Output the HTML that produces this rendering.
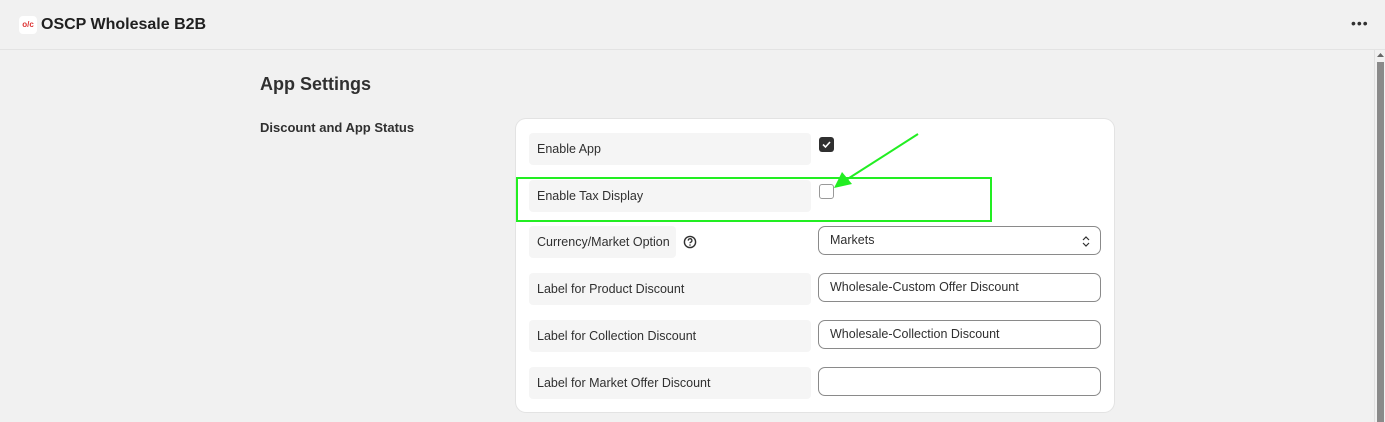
<!DOCTYPE html>
<html><head><style>
body{margin:0;width:1385px;height:422px;overflow:hidden;background:#f1f1f1;font-family:"Liberation Sans",Arial,sans-serif;color:#303030;position:relative}
.hdr{position:absolute;left:0;top:0;width:1385px;height:49px;border-bottom:1px solid #e3e3e3;background:#f1f1f1}
.logo{position:absolute;left:19px;top:16px;width:18px;height:18px;background:#fff;border-radius:4px;font-size:8px;font-weight:bold;color:#d33;line-height:18px;text-align:center}
.ttl{position:absolute;left:41px;top:16px;line-height:18px;font-size:16px;font-weight:bold;color:#202020}
.dots{position:absolute;left:1351px;top:14px;font-size:14px;letter-spacing:1px;line-height:18px}
.sb{position:absolute;left:1374px;top:50px;width:11px;height:372px;background:#f1f1f1;border-left:1px solid #e0e0e0}
.thumb{position:absolute;left:1377px;top:62px;width:7px;height:360px;background:#8a8a8a}
h1{position:absolute;left:260px;top:74px;margin:0;font-size:18px;font-weight:bold;color:#303030}
.sec{position:absolute;left:260px;top:120px;font-size:13px;font-weight:bold}
.card{position:absolute;left:516px;top:119px;width:598px;height:293px;background:#fff;border-radius:10px;box-shadow:0 0 0 1px #e3e3e3}
.lb{position:absolute;left:529px;width:282px;height:32px;background:#f5f5f5;border-radius:4px;font-size:12.5px;line-height:32px;padding-left:8px;box-sizing:border-box}
.in{position:absolute;left:818px;width:283px;height:29px;border:1px solid #8a8a8a;border-radius:7px;box-sizing:border-box;font-size:12.5px;line-height:27px;padding-left:11px;background:#fff}
.cb{position:absolute;left:819px;width:15px;height:15px;border-radius:3px;box-sizing:border-box}
</style></head><body>
<div class="hdr"><div class="logo">o/c</div><div class="ttl">OSCP Wholesale B2B</div><div class="dots">•••</div></div>
<div class="sb"></div><div class="thumb"></div>
<svg style="position:absolute;left:1376px;top:52px" width="9" height="6"><path d="M1 5l3.5-4 3.5 4z" fill="#666"/></svg>
<h1>App Settings</h1>
<div class="sec">Discount and App Status</div>
<div class="card"></div>
<div class="lb" style="top:133px">Enable App</div>
<div class="cb" style="top:137px;background:#303030"><svg width="15" height="15"><path d="M4 7.5l2.5 2.5 4.5-5" stroke="#fff" stroke-width="1.6" fill="none"/></svg></div>
<div class="lb" style="top:180px">Enable Tax Display</div>
<div class="cb" style="top:184px;border:1px solid #999;background:#fff"></div>
<div class="lb" style="top:226px;width:147px">Currency/Market Option</div>
<svg style="position:absolute;left:683px;top:235px" width="14" height="14"><circle cx="7" cy="7" r="5.6" stroke="#303030" stroke-width="1.4" fill="none"/><path d="M5.3 5.6a1.8 1.8 0 1 1 2.4 1.6c-.5.2-.7.5-.7 1" stroke="#303030" stroke-width="1.3" fill="none"/><circle cx="7" cy="10" r=".8" fill="#303030"/></svg>
<div class="in" style="top:226px;height:29px">Markets<svg style="position:absolute;right:10px;top:9px" width="8" height="11"><path d="M1 4l3-3 3 3M1 7l3 3 3-3" stroke="#303030" stroke-width="1.2" fill="none"/></svg></div>
<div class="lb" style="top:273px">Label for Product Discount</div>
<div class="in" style="top:273px">Wholesale-Custom Offer Discount</div>
<div class="lb" style="top:320px">Label for Collection Discount</div>
<div class="in" style="top:320px">Wholesale-Collection Discount</div>
<div class="lb" style="top:367px">Label for Market Offer Discount</div>
<div class="in" style="top:367px"></div>
<div style="position:absolute;left:516px;top:177px;width:476px;height:45px;border:2px solid #22ee22;box-sizing:border-box"></div>
<svg style="position:absolute;left:0;top:0" width="1385" height="422"><line x1="918" y1="134" x2="846" y2="180" stroke="#22ee22" stroke-width="2"/><polygon points="834,188 842,172 852,184" fill="#22ee22"/></svg>
</body></html>
